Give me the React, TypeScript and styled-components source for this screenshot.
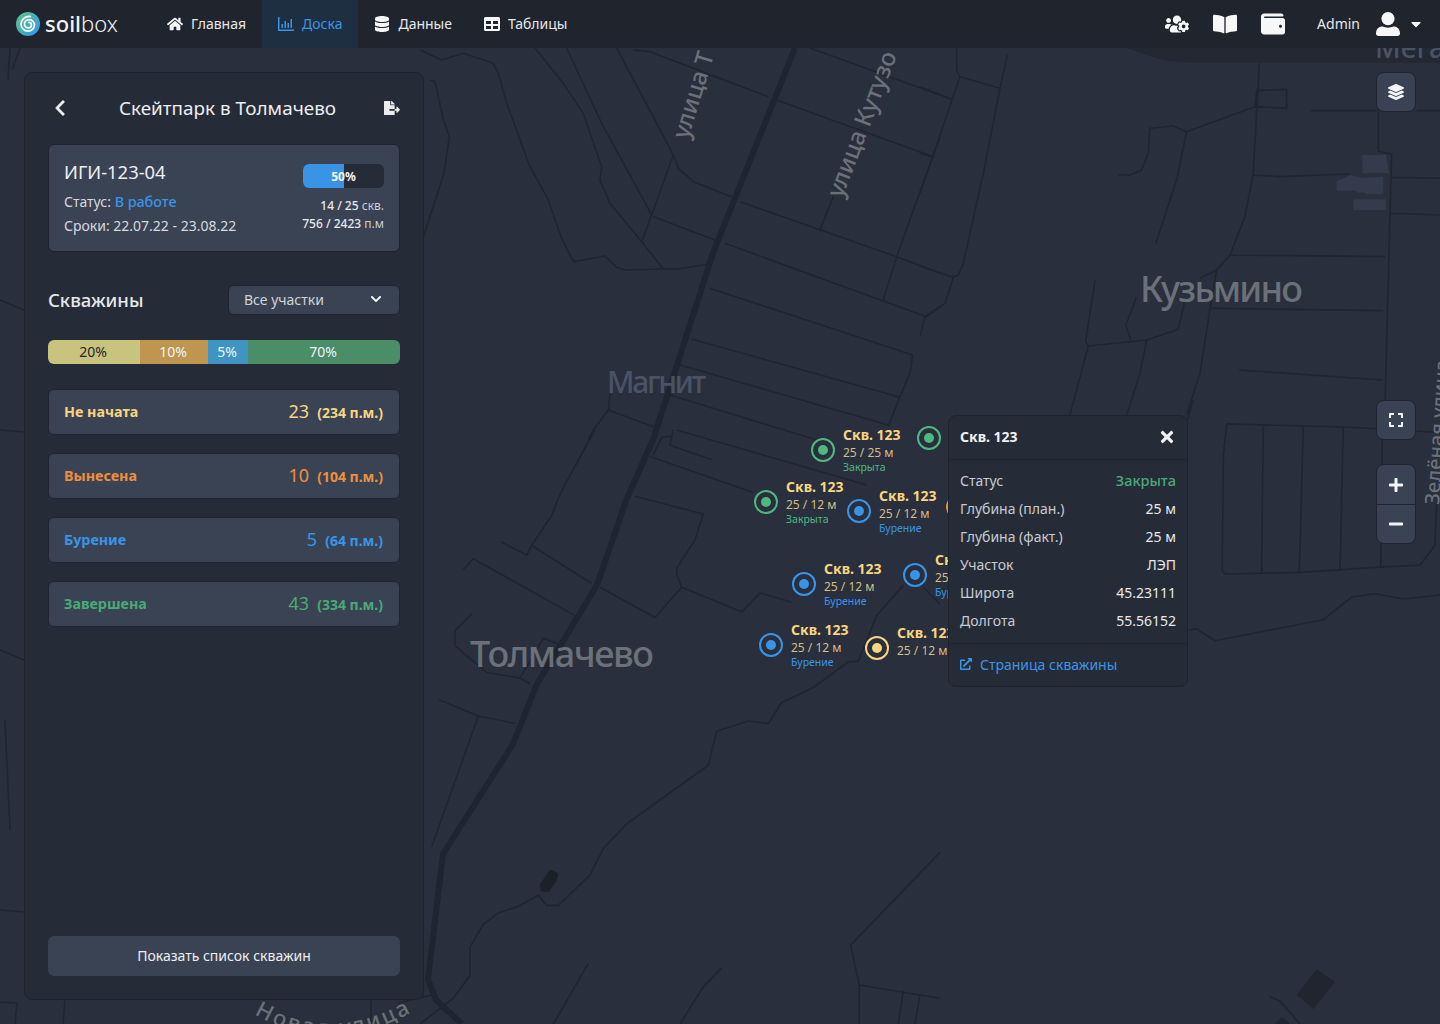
import React from 'react';
import styled, { createGlobalStyle } from 'styled-components';
import {
  FaBookOpen,
  FaCaretDown,
  FaChevronDown,
  FaChevronLeft,
  FaDatabase,
  FaExpand,
  FaExternalLinkAlt,
  FaFileExport,
  FaHome,
  FaLayerGroup,
  FaMinus,
  FaPlus,
  FaTable,
  FaTimes,
  FaUsersCog,
  FaWallet,
} from 'react-icons/fa';

const YELLOW = '#f8d57e';
const ORANGE = '#ed8f3c';
const BLUE = '#3a94e6';
const GREEN = '#48aa75';
const PIN_GREEN = '#4fb880';

const GlobalStyle = createGlobalStyle`
  html, body {
    margin: 0;
    padding: 0;
    background: #292f3d;
  }
  body {
    font-family: "Noto Sans", "Open Sans", sans-serif;
    color: #e6e8ec;
  }
  * {
    box-sizing: border-box;
  }
`;

const Page = styled.div`
  position: relative;
  width: 1440px;
  height: 1024px;
  overflow: hidden;
  display: flex;
  flex-direction: column;
`;

const MapDrawing = styled.svg`
  position: absolute;
  top: 0;
  left: 0;
  width: 1440px;
  height: 1024px;
  path {
    vector-effect: non-scaling-stroke;
  }
`;

const Roads = styled.path<{ $w?: number }>`
  fill: none;
  stroke: #1f2530;
  stroke-width: ${(p) => p.$w ?? 1.6}px;
  stroke-linejoin: round;
`;

const Block = styled.path<{ $fill: string }>`
  fill: ${(p) => p.$fill};
`;

const MapLabel = styled.text<{ $size: number; $color?: string }>`
  font-family: "Noto Sans", sans-serif;
  font-size: ${(p) => p.$size}px;
  font-weight: 500;
  fill: ${(p) => p.$color ?? '#6b7079'};
`;

const NavBar = styled.header`
  position: relative;
  z-index: 2;
  height: 48px;
  flex: none;
  display: flex;
  align-items: stretch;
  background: #1f242d;
  padding-left: 16px;
`;

const Logo = styled.div`
  display: flex;
  align-items: center;
  gap: 5px;
  width: 135px;
`;

const LogoText = styled.span`
  font-size: 22px;
  font-weight: 300;
  color: #f2f3f5;
  padding-bottom: 2px;
  b {
    font-weight: 500;
  }
`;

const NavItem = styled.a<{ $active?: boolean }>`
  display: flex;
  align-items: center;
  gap: 8px;
  padding: 0 16px 2px;
  font-size: 14px;
  color: ${(p) => (p.$active ? BLUE : '#e6e8ec')};
  background: ${(p) => (p.$active ? '#1f2f42' : 'transparent')};
  svg {
    margin-top: 2px;
    color: ${(p) => (p.$active ? BLUE : '#f7f7f7')};
  }
`;

const NavRight = styled.div`
  margin-left: auto;
  display: flex;
  align-items: center;
  padding-right: 16px;
  color: #f7f7f7;
`;

const NavIcons = styled.div`
  display: flex;
  gap: 24px;
  margin-right: 32px;
`;

const UserName = styled.span`
  font-size: 14px;
  color: #e6e8ec;
  margin-right: 16px;
  padding-bottom: 2px;
`;

const Caret = styled(FaCaretDown)`
  margin-left: 8px;
`;

const Content = styled.main`
  position: relative;
  flex: 1;
  min-height: 0;
  padding: 24px;
`;

const Panel = styled.section`
  position: relative;
  z-index: 1;
  width: 400px;
  height: 100%;
  display: flex;
  flex-direction: column;
  padding: 23px;
  background: #262c37;
  border: 1px solid #1e232c;
  border-radius: 8px;
`;

const PanelHeader = styled.div`
  display: flex;
  align-items: center;
  justify-content: space-between;
  height: 24px;
  padding-left: 3px;
  color: #ececec;
`;

const PanelTitle = styled.h1`
  margin: 0 0 0 2px;
  font-size: 18.9px;
  font-weight: 400;
  line-height: 24px;
  color: #eceef1;
`;

const Card = styled.div`
  display: flex;
  justify-content: space-between;
  height: 108px;
  margin-top: 24px;
  padding: 15px;
  background: #3a4354;
  border: 1px solid #1f2430;
  border-radius: 6px;
`;

const CardTitle = styled.div`
  font-size: 18.4px;
  line-height: 24px;
  color: #eceef1;
`;

const CardLine = styled.div`
  font-size: 14px;
  line-height: 24px;
  color: #d6d9df;
  &:nth-child(2) {
    margin-top: 6px;
  }
`;

const Accent = styled.span`
  color: ${BLUE};
  font-size: 14.3px;
  font-weight: 500;
`;

const CardStats = styled.div`
  display: flex;
  flex-direction: column;
  align-items: flex-end;
  padding-top: 4px;
`;

const Progress = styled.div`
  position: relative;
  width: 81px;
  height: 24px;
  margin-bottom: 9px;
  background: #262c37;
  border-radius: 6px;
  overflow: hidden;
`;

const ProgressFill = styled.div`
  height: 100%;
  background: ${BLUE};
`;

const ProgressText = styled.span`
  position: absolute;
  inset: 0;
  display: flex;
  align-items: center;
  justify-content: center;
  font-size: 12px;
  font-weight: 700;
  color: #f4f5f7;
`;

const StatLine = styled.div`
  font-size: 12px;
  line-height: 18px;
  font-weight: 500;
  color: #e6e8ec;
  span {
    font-size: 12px;
    font-weight: 400;
    color: #c9cdd5;
  }
`;

const SectionHeader = styled.div`
  display: flex;
  align-items: center;
  justify-content: space-between;
  margin-top: 33px;
`;

const SectionTitle = styled.h2`
  margin: 0 0 1px;
  font-size: 18.5px;
  font-weight: 500;
  color: #e6e8ec;
`;

const Select = styled.div`
  width: 172px;
  height: 30px;
  display: flex;
  align-items: center;
  justify-content: space-between;
  padding: 0 17px 2px 15px;
  font-size: 14px;
  color: #cfd3da;
  background: #3a4354;
  border: 1px solid #1f2430;
  border-radius: 6px;
  svg {
    color: #f2f3f5;
  }
`;

const StackBar = styled.div`
  display: flex;
  height: 24px;
  margin-top: 25px;
  border-radius: 6px;
  overflow: hidden;
`;

const StackPart = styled.div<{ $w: number; $bg: string; $dark?: boolean }>`
  width: ${(p) => p.$w}px;
  flex: none;
  display: flex;
  align-items: center;
  justify-content: center;
  padding: 0 2px 2px 0;
  font-size: 14px;
  color: ${(p) => (p.$dark ? '#23272f' : '#f2f3f5')};
  background: ${(p) => p.$bg};
`;

const StatusList = styled.div`
  display: flex;
  flex-direction: column;
  gap: 18px;
  margin-top: 25px;
`;

const StatusRow = styled.div<{ $color: string }>`
  height: 46px;
  display: flex;
  align-items: center;
  justify-content: space-between;
  padding: 0 16px 2px 15px;
  color: ${(p) => p.$color};
  background: #3a4354;
  border: 1px solid #1f2430;
  border-radius: 6px;
`;

const StatusName = styled.span`
  font-size: 14.3px;
  font-weight: 700;
`;

const StatusCount = styled.span`
  display: flex;
  align-items: baseline;
  gap: 8px;
  font-size: 18px;
  small {
    font-size: 14px;
    font-weight: 700;
  }
`;

const WideButton = styled.button`
  margin-top: auto;
  height: 40px;
  padding: 0 0 2px;
  border: 0;
  border-radius: 6px;
  font-family: inherit;
  font-size: 14px;
  color: #eceef1;
  background: #3a4354;
`;

const Pin = styled.div<{ $x: number; $y: number; $color: string }>`
  position: absolute;
  left: ${(p) => p.$x - 12}px;
  top: ${(p) => p.$y - 48 - 12}px;
  color: ${(p) => p.$color};
`;

const Ring = styled.div`
  width: 24px;
  height: 24px;
  display: flex;
  align-items: center;
  justify-content: center;
  border: 2px solid currentColor;
  border-radius: 50%;
  &::after {
    content: '';
    width: 10px;
    height: 10px;
    border-radius: 50%;
    background: currentColor;
  }
`;

const PinLabel = styled.div`
  position: absolute;
  left: 32px;
  top: -12px;
  width: 80px;
  white-space: nowrap;
`;

const PinTitle = styled.div`
  font-size: 14px;
  line-height: 18px;
  font-weight: 700;
  color: ${YELLOW};
`;

const PinDepth = styled.div`
  font-size: 12px;
  line-height: 18px;
  color: #d2bd86;
`;

const PinStatus = styled.div`
  font-size: 10.5px;
  line-height: 11px;
`;

const Popup = styled.aside`
  position: absolute;
  z-index: 1;
  left: 948px;
  top: 367px;
  width: 240px;
  height: 272px;
  display: flex;
  flex-direction: column;
  background: #262c37;
  border: 1px solid #1e232c;
  border-radius: 8px;
`;

const PopupHeader = styled.div`
  height: 44px;
  flex: none;
  display: flex;
  align-items: center;
  justify-content: space-between;
  padding: 0 11px 2px;
  font-size: 14px;
  font-weight: 700;
  color: #f0f1f3;
  border-bottom: 1px solid #1e232c;
`;

const PopupBody = styled.div`
  flex: 1;
  padding-top: 7px;
`;

const PopupRow = styled.div`
  height: 28px;
  display: flex;
  align-items: center;
  justify-content: space-between;
  padding: 0 11px 2px;
  font-size: 14px;
  color: #c6cad1;
`;

const PopupValue = styled.span<{ $color?: string }>`
  color: ${(p) => p.$color ?? '#e6e8ec'};
  font-size: ${(p) => (p.$color ? '14.5px' : '14px')};
  font-weight: ${(p) => (p.$color ? 500 : 400)};
`;

const PopupFooter = styled.a`
  height: 43px;
  flex: none;
  display: flex;
  align-items: center;
  gap: 8px;
  padding: 0 11px 2px;
  font-size: 14px;
  color: ${BLUE};
  border-top: 1px solid #1e232c;
`;

const Controls = styled.div`
  position: absolute;
  z-index: 1;
  right: 24px;
  top: 24px;
  display: flex;
  flex-direction: column;
  width: 40px;
  align-items: center;
`;

const MapButton = styled.button<{ $gap?: number }>`
  width: 40px;
  height: 40px;
  margin-top: ${(p) => p.$gap ?? 0}px;
  padding: 0;
  display: flex;
  align-items: center;
  justify-content: center;
  color: #f4f5f7;
  background: #3a4354;
  border: 1px solid #1f2430;
  border-radius: 8px;
`;

const ZoomGroup = styled.div`
  width: 40px;
  margin-top: 24px;
  display: flex;
  flex-direction: column;
  background: #3a4354;
  border: 1px solid #1f2430;
  border-radius: 8px;
  overflow: hidden;
  color: #f4f5f7;
`;

const ZoomButton = styled.div`
  height: 39px;
  display: flex;
  align-items: center;
  justify-content: center;
  & + & {
    border-top: 1px solid #1f2430;
  }
`;

type Well = {
  x: number;
  y: number;
  color: string;
  depth?: string;
  status?: string;
  labelled?: boolean;
};

const wells: Well[] = [
  { x: 823, y: 450, color: PIN_GREEN, depth: '25 / 25 м', status: 'Закрыта', labelled: true },
  { x: 929, y: 438, color: PIN_GREEN },
  { x: 766, y: 502, color: PIN_GREEN, depth: '25 / 12 м', status: 'Закрыта', labelled: true },
  { x: 859, y: 511, color: BLUE, depth: '25 / 12 м', status: 'Бурение', labelled: true },
  { x: 958, y: 507, color: ORANGE },
  { x: 804, y: 584, color: BLUE, depth: '25 / 12 м', status: 'Бурение', labelled: true },
  { x: 915, y: 575, color: BLUE, depth: '25 / 12 м', status: 'Бурение', labelled: true },
  { x: 771, y: 645, color: BLUE, depth: '25 / 12 м', status: 'Бурение', labelled: true },
  { x: 877, y: 648, color: YELLOW, depth: '25 / 12 м', labelled: true },
];

const statuses = [
  { name: 'Не начата', count: 23, meters: '(234 п.м.)', color: YELLOW },
  { name: 'Вынесена', count: 10, meters: '(104 п.м.)', color: ORANGE },
  { name: 'Бурение', count: 5, meters: '(64 п.м.)', color: BLUE },
  { name: 'Завершена', count: 43, meters: '(334 п.м.)', color: GREEN },
];

const details = [
  { label: 'Статус', value: 'Закрыта', color: GREEN },
  { label: 'Глубина (план.)', value: '25 м' },
  { label: 'Глубина (факт.)', value: '25 м' },
  { label: 'Участок', value: 'ЛЭП' },
  { label: 'Широта', value: '45.23111' },
  { label: 'Долгота', value: '55.56152' },
];

const LogoMark = () => (
  <svg width="24" height="24" viewBox="0 0 24 24">
    <defs>
      <linearGradient id="logoFill" x1="0.1" y1="0.1" x2="0.9" y2="0.9">
        <stop offset="0" stopColor="#5cc08c" />
        <stop offset="1" stopColor="#2f9be6" />
      </linearGradient>
    </defs>
    <circle cx="12" cy="12" r="12" fill="url(#logoFill)" />
    <path
      d="M14.5 4.6C9.500 3.800 5 7.400 5 12.200c0 4 3.200 7 7 7 3.600 0 6.400-2.800 6.400-6.200 0-3-2.400-5.400-5.300-5.400-2.600 0-4.600 2-4.600 4.500 0 2.100 1.700 3.800 3.700 3.800 1.800 0 3.200-1.400 3.200-3 0-1.400-1.100-2.500-2.500-2.500"
      fill="none"
      stroke="#fff"
      strokeWidth="1.700"
      strokeLinecap="round"
    />
  </svg>
);

const BoardIcon = () => (
  <svg width="16" height="14" viewBox="0 0 16 14" fill="currentColor">
    <path d="M0 0h1.500v12.500H16V14H0z" />
    <path d="M3.500 7H5v4H3.500zM6.500 4H8v7H6.500zM9.500 6H11v5H9.500zM12.500 2H14v9h-1.500z" />
  </svg>
);

const UserIcon = () => (
  <svg width="24" height="24" viewBox="0 0 24 24" fill="currentColor">
    <circle cx="12" cy="6.600" r="6.600" />
    <path d="M0 21.500C0 17.200 3 14.600 6.400 14.600c1.700.7 3.500 1.100 5.600 1.100s3.900-.4 5.600-1.100C21 14.600 24 17.200 24 21.500 24 23 23 24 21.500 24h-19C1 24 0 23 0 21.500z" />
  </svg>
);

// The base map: path data is in the scale of the crop each group was traced from
const MapBackground = () => (
  <MapDrawing viewBox="0 0 1440 1024">
    <g transform="translate(420 40) scale(0.3333)">
      <Roads d="M0 30L65 60 130 40 220 70 235 100 260 190 330 380 385 480 425 595 460 665 555 648 590 682 615 690 730 687 770 687 865 673" />
      <Roads d="M345 24L430 130 490 220 545 380 540 420 570 490 665 605 730 687" />
      <Roads d="M440 24L545 250 695 525 665 605M590 24L760 345 695 525M760 345L775 385 820 425 935 470" />
      <Roads d="M700 530L885 600M640 30L690 35 1045 170M1070 180L1540 350M1170 24L1560 165" />
      <Roads d="M960 485L1430 650 1560 700M915 610L1520 830 1560 800M1560 290L1430 650 1390 780" />
      <Roads d="M870 745L1478 945 1470 1000 1440 1070 1405 1160M815 897L1440 1072M780 975L1405 1155M750 1065L1190 1200" />
      <Roads d="M1200 570L1240 470M570 1060L565 1110 700 1160M565 1110L520 1170 505 1200M30 120L45 125 70 240 88 290 72 400 10 590" />
    </g>
    <g transform="translate(920 40) scale(0.3333)">
      <Block $fill="#232833" d="M620 24L720 58Q770 68 850 68L1560 68 1560 24Z" />
      <Block $fill="#333b4c" d="M1327 345H1398L1407 400H1327ZM1250 424L1290 406 1330 414 1390 410V462H1335V458H1310V452H1250ZM1300 478H1398V510H1300Z" />
      <Roads d="M110 24L110 90 120 110 240 145M262 45L240 145 190 400 130 670 115 705 100 712 0 678M120 110L0 460M0 140L95 178M0 340L35 350M100 712L75 790 15 830 0 890" />
      <Roads d="M595 405L630 405 665 390 685 340 690 265 760 258 800 275 1005 200 1100 205 1100 148 1010 152 1005 200M800 275L770 420 707 612" />
      <Roads d="M1018 70L1000 400 975 530 930 645 890 690 840 715M1000 405L1080 410 1290 402M930 645L1395 650" />
      <Roads d="M1375 200L1375 335 1415 342 1395 1100M1172 212L1370 212M1490 212L1560 212M1415 412L1560 415M1410 520L1560 525" />
      <Roads d="M875 805L1390 812M957 990L1388 1020M525 722L497 905 505 918 680 900 775 868 795 780M505 918L450 1125M680 900L660 1000 620 1125" />
      <Roads d="M890 690L870 805 840 1000 800 1125M650 770L618 855 632 900" />
    </g>
    <g transform="translate(1180 400) scale(0.3333 0.398)">
      <Roads d="M140 60L130 140 127 430 135 437 360 433 600 420 720 415 765 365 770 260M140 60L490 68 590 72M710 78L780 82" />
      <Roads d="M250 62L245 433M370 65L358 433M490 68L480 428M607 100L602 420" />
      <Roads d="M25 578L50 575 105 605 430 552 515 495 585 487 670 500 780 490M40 0L22 50" />
      <Block $fill="#20252f" d="M410 1430L465 1462 400 1530 350 1495Z" />
      <Roads d="M270 1500L300 1510 360 1568" />
      <Block $fill="#20252f" d="M285 1568L305 1550 330 1568Z" />
    </g>
    <g transform="translate(420 430) scale(0.3333 0.3788)">
      <Roads d="M760 0L750 40 875 78M725 20L700 65M725 20L760 15M770 0L1340 145M690 70L1000 165" />
      <Roads d="M645 175L850 222 825 290 770 365 770 380 785 415 705 495 540 415M785 415L965 480 1020 430 1115 455" />
      <Roads d="M525 0L450 120 420 170 395 225 335 305 320 330 242 295M335 305L515 405M130 368L160 340 465 490" />
      <Roads d="M155 485L105 530 105 570 200 640 300 655 330 670M300 655L370 550 430 570M57 712L175 755 285 775M175 755L35 1100" />
      <Roads d="M1450 410L1370 490 1315 610 1285 612 1180 680 1085 720 1045 775 985 768 890 795 865 885 620 1040 550 1105 510 1175 415 1255 380 1255 355 1228 295 1258 235 1275 190 1305 150 1365 150 1440 100 1500 0 1568" />
      <Roads d="M1510 415L1560 460M505 1408L400 1568M905 1420L850 1470 780 1568M1560 1115L1292 1360 1318 1465 1560 1500M1318 1465L1318 1568M1450 1480L1435 1568M1500 1490L1485 1568" />
      <Block $fill="#1c2029" d="M390 1160L415 1170 410 1190 385 1220 362 1218 360 1200Z" />
    </g>
    <Roads $w={6} d="M795 48L713 253 653 440 627 498 597 585 537 684 513 744 443 854 428 979 436 1000 462 1024" />
    <Roads d="M10 48L8 80M0 300L24 310M0 430L24 432M0 650L24 660M5 720L10 830M0 910L24 912M0 1002L17 1003 15 1024M65 1000L63 1024M371 1000V1024M398 1003L432 995M20 48L12 70" />

    <MapLabel $size={28} $color="#4a5366" x="1375" y="58">Мега</MapLabel>
    <MapLabel $size={30} $color="#4a5366" x="607" y="393" textLength="99">Магнит</MapLabel>
    <MapLabel $size={36} x="1140" y="302" textLength="163">Кузьмино</MapLabel>
    <MapLabel $size={36} x="470" y="667" textLength="184">Толмачево</MapLabel>
    <MapLabel $size={24} transform="translate(688 140) rotate(-73)">улица Т</MapLabel>
    <MapLabel $size={24} transform="translate(842 199) rotate(-69)">улица Кутузо</MapLabel>
    <MapLabel $size={20} transform="translate(1439 505) rotate(-86)">Зелёная улица</MapLabel>
    <path id="newStreet" d="M254 1014Q330 1058 412 1012" fill="none" />
    <MapLabel $size={22}>
      <textPath href="#newStreet" textLength="165">Новая улица</textPath>
    </MapLabel>
  </MapDrawing>
);

const App: React.FC = () => {
  return (
    <Page>
      <GlobalStyle />
      <MapBackground />
      <NavBar>
        <Logo>
          <LogoMark />
          <LogoText>
            <b>soil</b>box
          </LogoText>
        </Logo>
        <NavItem>
          <FaHome size={16} />
          Главная
        </NavItem>
        <NavItem $active>
          <BoardIcon />
          Доска
        </NavItem>
        <NavItem>
          <FaDatabase size={16} />
          Данные
        </NavItem>
        <NavItem>
          <FaTable size={16} />
          Таблицы
        </NavItem>
        <NavRight>
          <NavIcons>
            <FaUsersCog size={24} />
            <FaBookOpen size={24} />
            <FaWallet size={24} />
          </NavIcons>
          <UserName>Admin</UserName>
          <UserIcon />
          <Caret size={16} />
        </NavRight>
      </NavBar>

      <Content>
        <Panel>
          <PanelHeader>
            <FaChevronLeft size={18} />
            <PanelTitle>Скейтпарк в Толмачево</PanelTitle>
            <FaFileExport size={16} />
          </PanelHeader>

          <Card>
            <div>
              <CardTitle>ИГИ-123-04</CardTitle>
              <CardLine>
                Статус: <Accent>В работе</Accent>
              </CardLine>
              <CardLine>Сроки: 22.07.22 - 23.08.22</CardLine>
            </div>
            <CardStats>
              <Progress>
                <ProgressFill style={{ width: '50%' }} />
                <ProgressText>50%</ProgressText>
              </Progress>
              <StatLine>
                14 / 25 <span>скв.</span>
              </StatLine>
              <StatLine>
                756 / 2423 <span>п.м</span>
              </StatLine>
            </CardStats>
          </Card>

          <SectionHeader>
            <SectionTitle>Скважины</SectionTitle>
            <Select>
              Все участки
              <FaChevronDown size={12} />
            </Select>
          </SectionHeader>

          <StackBar>
            <StackPart $w={92} $bg="#c8c47e" $dark>20%</StackPart>
            <StackPart $w={68} $bg="#bf9650">10%</StackPart>
            <StackPart $w={40} $bg="#3f95c2">5%</StackPart>
            <StackPart $w={152} $bg="#4a8e68">70%</StackPart>
          </StackBar>

          <StatusList>
            {statuses.map((s) => (
              <StatusRow key={s.name} $color={s.color}>
                <StatusName>{s.name}</StatusName>
                <StatusCount>
                  {s.count}
                  <small>{s.meters}</small>
                </StatusCount>
              </StatusRow>
            ))}
          </StatusList>

          <WideButton>Показать список скважин</WideButton>
        </Panel>

        {wells.map((w) => (
          <Pin key={`${w.x}-${w.y}`} $x={w.x} $y={w.y} $color={w.color}>
            <Ring />
            {w.labelled && (
              <PinLabel>
                <PinTitle>Скв. 123</PinTitle>
                <PinDepth>{w.depth}</PinDepth>
                {w.status && <PinStatus>{w.status}</PinStatus>}
              </PinLabel>
            )}
          </Pin>
        ))}

        <Popup>
          <PopupHeader>
            Скв. 123
            <FaTimes size={18} />
          </PopupHeader>
          <PopupBody>
            {details.map((d) => (
              <PopupRow key={d.label}>
                {d.label}
                <PopupValue $color={d.color}>{d.value}</PopupValue>
              </PopupRow>
            ))}
          </PopupBody>
          <PopupFooter>
            <FaExternalLinkAlt size={12} />
            Страница скважины
          </PopupFooter>
        </Popup>

        <Controls>
          <MapButton>
            <FaLayerGroup size={16} />
          </MapButton>
          <MapButton $gap={288}>
            <FaExpand size={16} />
          </MapButton>
          <ZoomGroup>
            <ZoomButton>
              <FaPlus size={16} />
            </ZoomButton>
            <ZoomButton>
              <FaMinus size={16} />
            </ZoomButton>
          </ZoomGroup>
        </Controls>
      </Content>
    </Page>
  );
};

export default App;
